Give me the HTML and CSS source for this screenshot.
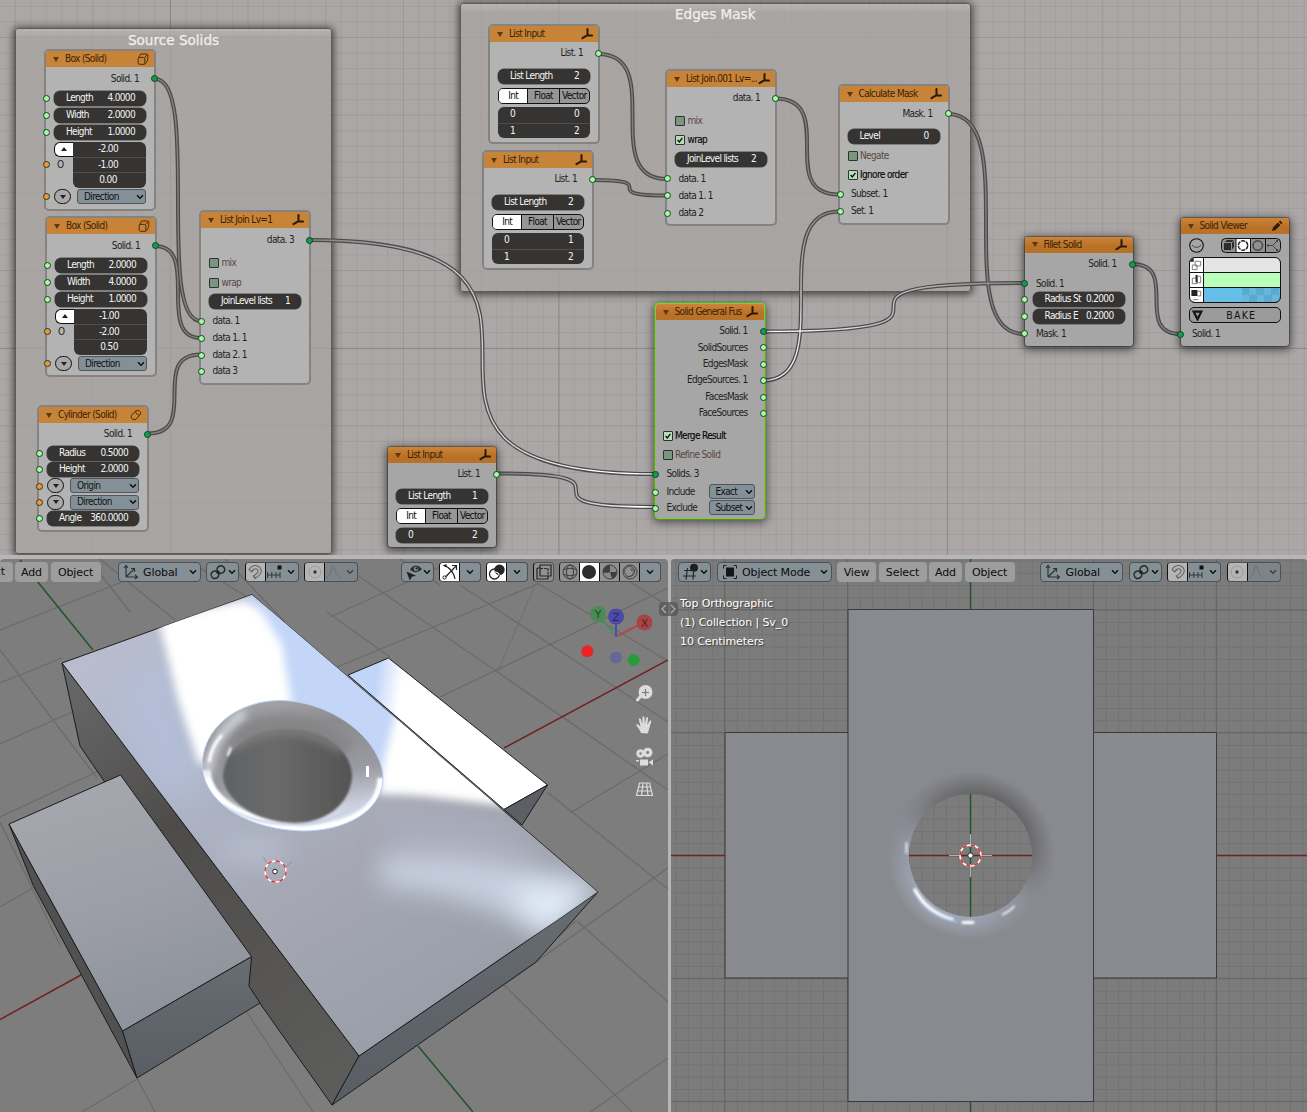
FILE: index.html
```html
<!DOCTYPE html>
<html lang="en">
<head>
<meta charset="utf-8">
<title>Node editor</title>
<link rel="stylesheet" href="styles.css">
</head>
<body>
<svg class="defs" aria-hidden="true">
  <symbol id="i-axes" viewBox="0 0 12 12"><path d="M6.500 1v6.200M6.500 7.200L1.500 10.200M6.500 7.200L11 7.600" fill="none" stroke="#2a1a08" stroke-width="2" stroke-linecap="round"/></symbol>
  <symbol id="i-cube" viewBox="0 0 12 12"><path d="M3.600 1h5.800q1.600 0 1.500 1.400l-.4 5.200-2.200 3.200q-.4.500-1.200.5H2.600q-1.500 0-1.500-1.500l.2-4.600zM1.400 5.200q.4-.8 1.200-.8h3.800q1.400 0 1.400 1.400v4.800M7.600 4.600l2.800-3" fill="none" stroke="#4a2c0c" stroke-width="1"/></symbol>
  <symbol id="i-cyl" viewBox="0 0 12 12"><path d="M1.400 6.200L6 1.800q1.600-1.200 3.500.2 1.900 1.600.8 3.600L6 10.200q-1.800 1.200-3.700-.2Q.6 8.200 1.400 6.200zM5.800 2.200q-.4 3.200 4 4" fill="none" stroke="#4a2c0c" stroke-width="1"/></symbol>
  <symbol id="i-pen" viewBox="0 0 12 12"><path d="M1 11l1-3.400L7 2.600l2.400 2.400-5 5zM7.800 1.800l1.300-1.200 2.400 2.300-1.300 1.300z" fill="#2a1a08"/></symbol>
  <symbol id="i-chev" viewBox="0 0 8 6"><path d="M1 1.200l3 3 3-3" fill="none" stroke="#111" stroke-width="1.500"/></symbol>
  <symbol id="i-tick" viewBox="0 0 10 10"><path d="M2 5l2.200 2.500L8 2.300" fill="none" stroke="#0a0a0a" stroke-width="1.600"/></symbol>
  <symbol id="i-orient" viewBox="0 0 16 16"><path d="M3 13V2M1 4l2-2.500L5 4M3 13h11M12 11l2.500 2-2.500 2M3 13l8-8M8 4.500h3.500V8" fill="none" stroke="#2c3135" stroke-width="1.100"/></symbol>
  <symbol id="i-pivot" viewBox="0 0 16 16"><path d="M6.500 7q-4-.5-5.300 2.500Q.5 13 3.500 14.500q4 .5 5.300-3 .4-2.500-1.300-3.500M9.500 9.500q4 .2 5.200-3Q15 3 12 1.800 8 1.500 7 5q-.2 2 1 3" fill="none" stroke="#26292c" stroke-width="1.400"/><circle cx="8" cy="8.200" r="1.700" fill="#1c1c1c"/></symbol>
  <symbol id="i-magnet" viewBox="0 0 16 16"><path d="M2 5.500Q5 1 9 1.500q5 1 5.300 5.500-.3 4-6.300 7.500L6.300 12q4.500-2.500 4.700-5-.2-2.200-2.500-2.300-2 0-4.300 3zM4.500 8L7 5.500M8.500 14l-2-2.500" fill="none" stroke="#666" stroke-width="1.100"/></symbol>
  <symbol id="i-incr" viewBox="0 0 16 16"><path d="M1.500 8v6M5.800 8v6M10 8v6M14 8v6M1.500 11h12.500" stroke="#33383b" fill="none"/><path d="M11.500 1.500h4v4h-4z" fill="#111"/></symbol>
  <symbol id="i-prop" viewBox="0 0 16 16"><circle cx="8" cy="8" r="6" fill="none" stroke="#9a9a9a"/><circle cx="8" cy="8" r="1.700" fill="#333"/></symbol>
  <symbol id="i-bell" viewBox="0 0 16 16"><path d="M1 13.500Q5 13 6 6.500T8 2q1 .2 2 4.500t5 7" fill="none" stroke="#5d6265"/></symbol>
  <symbol id="i-eye" viewBox="0 0 18 18"><path d="M5 6.500Q10.500-1 17 6 11 12 5 6.500z" fill="#26292b"/><circle cx="11" cy="5.800" r="2.300" fill="#87929a"/><circle cx="11.500" cy="5.300" r="1.100" fill="#111"/><path d="M1.500 8.500l9.500 4.300-4.200 1L4.800 17.500z" fill="#1d1f20"/></symbol>
  <symbol id="i-gizmo" viewBox="0 0 18 18"><path d="M4 2.500Q12.500 7 14 16M4 14.500L15 3M11 2.500h4.500V7" fill="none" stroke="#222" stroke-width="1.200"/><circle cx="3.500" cy="14.500" r="1.600" fill="#fff" stroke="#222"/><path d="M1.500 2.500l4-1.500v3.500z" fill="#222"/></symbol>
  <symbol id="i-over" viewBox="0 0 18 18"><circle cx="6.500" cy="11" r="5" fill="#fff" stroke="#222" stroke-width="1.300"/><circle cx="11.500" cy="6.800" r="5.200" fill="#262626"/><path d="M6.700 9a5 5 0 0 1 4.700 2.800" fill="none" stroke="#eee" stroke-width="1.200"/></symbol>
  <symbol id="i-xray" viewBox="0 0 18 18"><path d="M5 2h11v11H5zM2 5v11h11v-3M2 5h3" fill="none" stroke="#222" stroke-width="1.200"/><path d="M5.500 5.500h7.500V13" fill="none" stroke="#222" stroke-width="1.200" stroke-dasharray="2.500 1.200"/></symbol>
  <symbol id="i-wire" viewBox="0 0 18 18"><circle cx="9" cy="9" r="7" fill="none" stroke="#3d3d3d"/><ellipse cx="9" cy="9" rx="3.500" ry="7" fill="none" stroke="#3d3d3d"/><path d="M2.500 6.500q6.500-2.500 13 0M2.500 11.500q6.500 2.500 13 0" fill="none" stroke="#3d3d3d"/></symbol>
  <symbol id="i-mat" viewBox="0 0 18 18"><circle cx="9" cy="9" r="7" fill="#8a8a8a" stroke="#3d3d3d"/><path d="M9 2a7 7 0 0 0-7 7q3 2 7 0zM9 9h7a7 7 0 0 1-5 6.700z" fill="#3f3f3f"/></symbol>
  <symbol id="i-rend" viewBox="0 0 18 18"><circle cx="9" cy="9" r="7" fill="none" stroke="#3d3d3d"/><circle cx="8.500" cy="8.500" r="5" fill="none" stroke="#4a4a4a"/><path d="M10.500 5.500l2 2-1 1-2-2zM5 14q8 0 9-8" fill="none" stroke="#4a4a4a"/></symbol>
  <symbol id="i-3d" viewBox="0 0 18 18"><path d="M2 7.500h13M1 13h13M5.500 5L4 16.500M11.500 9L11 16.500" fill="none" stroke="#26292b" stroke-width="1.200"/><circle cx="12" cy="4.800" r="4" fill="#1d1f20"/></symbol>
  <symbol id="i-obj" viewBox="0 0 16 16"><path d="M4.500 1.500h-3v3M11.500 1.500h3v3M4.500 14.500h-3v-3M11.500 14.500h3v-3" fill="none" stroke="#222"/><path d="M4 3.500h8v9H4z" fill="#161616"/></symbol>
</svg>

<main class="app">
<section class="canvas">
  <div class="frame frame-src"><h2>Source Solids</h2></div>
  <div class="frame frame-mask"><h2>Edges Mask</h2></div>

  <svg class="links" width="1307" height="555">
    <defs>
      <linearGradient id="toSel" gradientUnits="userSpaceOnUse" x1="310" y1="0" x2="600" y2="0"><stop offset="0" stop-color="#828282"/><stop offset="1" stop-color="#fff"/></linearGradient>
      <linearGradient id="toSel2" gradientUnits="userSpaceOnUse" x1="520" y1="0" x2="640" y2="0"><stop offset="0" stop-color="#828282"/><stop offset="1" stop-color="#fff"/></linearGradient>
      <linearGradient id="fromSel" gradientUnits="userSpaceOnUse" x1="790" y1="360" x2="835" y2="211"><stop offset="0" stop-color="#f2f2f2"/><stop offset="1" stop-color="#828282"/></linearGradient>
      <linearGradient id="fromSel2" gradientUnits="userSpaceOnUse" x1="770" y1="0" x2="1024" y2="0"><stop offset="0" stop-color="#fff"/><stop offset="1" stop-color="#828282"/></linearGradient>
      <path id="w1" d="M155 79C201 79 155 321 201 321"/><path id="w2" d="M155 246C201 246 155 338 201 338"/><path id="w3" d="M148 433.500C201 433.500 148 354.500 201 354.500"/>
      <path id="w4" d="M310 240C655 240 310 474 655 474"/><path id="w5" d="M598 54C667 54 598 179 667 179"/><path id="w6" d="M592 180C667 180 592 195.500 667 195.500"/>
      <path id="w7" d="M775 98.500C839 98.500 775 194.500 839 194.500"/><path id="w8" d="M948 114C1024 114 948 334 1024 334"/><path id="w9" d="M763 380.500C839 380.500 763 211.500 839 211.500"/>
      <path id="w10" d="M763 331.500C1024 331.500 763 283 1024 283"/><path id="w11" d="M497 473.500C655 473.500 497 507 655 507"/><path id="w12" d="M1132 264C1181 264 1132 334 1181 334"/>
    </defs>
    <g class="wire-out">
      <use href="#w1"/><use href="#w2"/><use href="#w3"/><use href="#w4"/><use href="#w5"/><use href="#w6"/><use href="#w7"/><use href="#w8"/><use href="#w9"/><use href="#w10"/><use href="#w11"/><use href="#w12"/>
    </g>
    <g class="wire-in">
      <use href="#w1"/><use href="#w2"/><use href="#w3"/><use href="#w5"/><use href="#w6"/><use href="#w7"/><use href="#w8"/><use href="#w12"/>
      <use href="#w4" stroke="url(#toSel)"/><use href="#w9" stroke="url(#fromSel)"/><use href="#w10" stroke="url(#fromSel2)"/><use href="#w11" stroke="url(#toSel2)"/>
    </g>
  </svg>

  <article class="node framed n-box1">
    <header><b></b><span>Box (Solid)</span><svg><use href="#i-cube"/></svg></header>
    <div class="rows r-box">
      <div class="row out">Solid. 1<i class="s so solid"></i></div>
      <div class="row"><i class="s si"></i><p class="field"><span>Length</span><span>4.0000</span></p></div>
      <div class="row"><i class="s si"></i><p class="field"><span>Width</span><span>2.0000</span></p></div>
      <div class="row"><i class="s si"></i><p class="field"><span>Height</span><span>1.0000</span></p></div>
      <div class="row vec"><i class="s si vecs"></i><div class="side"><em class="up"></em><span>O</span></div><div class="stack"><span>-2.00</span><span>-1.00</span><span>0.00</span></div></div>
      <div class="row"><i class="s si vecs"></i><em class="down"></em><p class="drop">Direction<svg><use href="#i-chev"/></svg></p></div>
    </div>
  </article>

  <article class="node framed n-box2">
    <header><b></b><span>Box (Solid)</span><svg><use href="#i-cube"/></svg></header>
    <div class="rows r-box">
      <div class="row out">Solid. 1<i class="s so solid"></i></div>
      <div class="row"><i class="s si"></i><p class="field"><span>Length</span><span>2.0000</span></p></div>
      <div class="row"><i class="s si"></i><p class="field"><span>Width</span><span>4.0000</span></p></div>
      <div class="row"><i class="s si"></i><p class="field"><span>Height</span><span>1.0000</span></p></div>
      <div class="row vec"><i class="s si vecs"></i><div class="side"><em class="up"></em><span>O</span></div><div class="stack"><span>-1.00</span><span>-2.00</span><span>0.50</span></div></div>
      <div class="row"><i class="s si vecs"></i><em class="down"></em><p class="drop">Direction<svg><use href="#i-chev"/></svg></p></div>
    </div>
  </article>

  <article class="node framed n-cyl">
    <header><b></b><span>Cylinder (Solid)</span><svg><use href="#i-cyl"/></svg></header>
    <div class="rows r-cyl">
      <div class="row out">Solid. 1<i class="s so solid"></i></div>
      <div class="row"><i class="s si"></i><p class="field"><span>Radius</span><span>0.5000</span></p></div>
      <div class="row"><i class="s si"></i><p class="field"><span>Height</span><span>2.0000</span></p></div>
      <div class="row"><i class="s si vecs"></i><em class="down"></em><p class="drop">Origin<svg><use href="#i-chev"/></svg></p></div>
      <div class="row"><i class="s si vecs"></i><em class="down"></em><p class="drop">Direction<svg><use href="#i-chev"/></svg></p></div>
      <div class="row"><i class="s si"></i><p class="field"><span>Angle</span><span>360.0000</span></p></div>
    </div>
  </article>

  <article class="node framed n-join">
    <header><b></b><span>List Join Lv=1</span><svg><use href="#i-axes"/></svg></header>
    <div class="rows r-join">
      <div class="row out">data. 3<i class="s so solid"></i></div>
      <div class="row off"><u></u>mix</div>
      <div class="row off"><u></u>wrap</div>
      <div class="row"><p class="field"><span>JoinLevel lists</span><span>1</span></p></div>
      <div class="row in"><i class="s si"></i>data. 1</div>
      <div class="row in"><i class="s si"></i>data 1. 1</div>
      <div class="row in"><i class="s si"></i>data 2. 1</div>
      <div class="row in"><i class="s si"></i>data 3</div>
    </div>
  </article>

  <article class="node framed n-lista">
    <header><b></b><span>List Input</span><svg><use href="#i-axes"/></svg></header>
    <div class="rows r-list">
      <div class="row out">List. 1<i class="s so"></i></div>
      <div class="row"><p class="field"><span>List Length</span><span>2</span></p></div>
      <div class="row"><div class="tabs"><span>Int</span><span>Float</span><span>Vector</span></div></div>
      <div class="row"><div class="pairs"><p><span>0</span><span>0</span></p><p><span>1</span><span>2</span></p></div></div>
    </div>
  </article>

  <article class="node framed n-listb">
    <header><b></b><span>List Input</span><svg><use href="#i-axes"/></svg></header>
    <div class="rows r-list">
      <div class="row out">List. 1<i class="s so"></i></div>
      <div class="row"><p class="field"><span>List Length</span><span>2</span></p></div>
      <div class="row"><div class="tabs"><span>Int</span><span>Float</span><span>Vector</span></div></div>
      <div class="row"><div class="pairs"><p><span>0</span><span>1</span></p><p><span>1</span><span>2</span></p></div></div>
    </div>
  </article>

  <article class="node framed n-join1">
    <header><b></b><span>List Join.001 Lv=...</span><svg><use href="#i-axes"/></svg></header>
    <div class="rows r-join1">
      <div class="row out">data. 1<i class="s so"></i></div>
      <div class="row off"><u></u>mix</div>
      <div class="row on"><u><svg><use href="#i-tick"/></svg></u>wrap</div>
      <div class="row"><p class="field"><span>JoinLevel lists</span><span>2</span></p></div>
      <div class="row in"><i class="s si"></i>data. 1</div>
      <div class="row in"><i class="s si"></i>data 1. 1</div>
      <div class="row in"><i class="s si"></i>data 2</div>
    </div>
  </article>

  <article class="node framed n-calc">
    <header><b></b><span>Calculate Mask</span><svg><use href="#i-axes"/></svg></header>
    <div class="rows r-calc">
      <div class="row out">Mask. 1<i class="s so"></i></div>
      <div class="row"><p class="field"><span>Level</span><span>0</span></p></div>
      <div class="row off"><u></u>Negate</div>
      <div class="row on"><u><svg><use href="#i-tick"/></svg></u>Ignore order</div>
      <div class="row in"><i class="s si"></i>Subset. 1</div>
      <div class="row in"><i class="s si"></i>Set. 1</div>
    </div>
  </article>

  <article class="node free n-listc">
    <header><b></b><span>List Input</span><svg><use href="#i-axes"/></svg></header>
    <div class="rows r-listc">
      <div class="row out">List. 1<i class="s so"></i></div>
      <div class="row"><p class="field"><span>List Length</span><span>1</span></p></div>
      <div class="row"><div class="tabs"><span>Int</span><span>Float</span><span>Vector</span></div></div>
      <div class="row"><p class="field"><span>0</span><span>2</span></p></div>
    </div>
  </article>

  <article class="node free selected n-fuse">
    <header><b></b><span>Solid General Fus</span><svg><use href="#i-axes"/></svg></header>
    <div class="rows r-fuse">
      <div class="row out">Solid. 1<i class="s so solid"></i></div>
      <div class="row out">SolidSources<i class="s so"></i></div>
      <div class="row out">EdgesMask<i class="s so"></i></div>
      <div class="row out">EdgeSources. 1<i class="s so"></i></div>
      <div class="row out">FacesMask<i class="s so"></i></div>
      <div class="row out">FaceSources<i class="s so"></i></div>
      <div class="row on gap"><u><svg><use href="#i-tick"/></svg></u>Merge Result</div>
      <div class="row off"><u></u>Refine Solid</div>
      <div class="row in"><i class="s si solid"></i>Solids. 3</div>
      <div class="row in"><i class="s si"></i>Include<p class="drop short">Exact<svg><use href="#i-chev"/></svg></p></div>
      <div class="row in"><i class="s si"></i>Exclude<p class="drop short">Subset<svg><use href="#i-chev"/></svg></p></div>
    </div>
  </article>

  <article class="node free n-fillet">
    <header><b></b><span>Fillet Solid</span><svg><use href="#i-axes"/></svg></header>
    <div class="rows r-fillet">
      <div class="row out">Solid. 1<i class="s so solid"></i></div>
      <div class="row in"><i class="s si solid"></i>Solid. 1</div>
      <div class="row"><i class="s si"></i><p class="field"><span>Radius St</span><span>0.2000</span></p></div>
      <div class="row"><i class="s si"></i><p class="field"><span>Radius E</span><span>0.2000</span></p></div>
      <div class="row in"><i class="s si"></i>Mask. 1</div>
    </div>
  </article>

  <article class="node free n-view">
    <header><b></b><span>Solid Viewer</span><svg><use href="#i-pen"/></svg></header>
    <div class="rows r-view">
      <div class="row tools">
        <svg width="15" height="15" viewBox="0 0 15 15"><circle cx="7.500" cy="7.500" r="6.800" fill="none" stroke="#111" stroke-width="1.100"/><path d="M3 7q4.500 5 9 0" fill="none" stroke="#444"/></svg>
        <svg width="60" height="15" viewBox="0 0 60 15"><rect x=".5" y=".5" width="59" height="14" rx="4" fill="#909090" stroke="#111"/><path d="M15 1h14v13H15z" fill="#fff"/><path d="M15 0v15M29.500 0v15M44.500 0v15" stroke="#111"/><path d="M3 5h7v7H3zM4 4l2-2h7l-2 2zM11 5l2-2v6l-2 2.500z" fill="#2c2c2c"/><circle cx="22" cy="7.500" r="4.700" fill="none" stroke="#222" stroke-width="1.500" stroke-dasharray="4.100 .8"/><circle cx="36.800" cy="7.500" r="4.700" fill="none" stroke="#444" stroke-width="1.500"/><path d="M56 3l-4.500 4.500L56 12M51.500 7.500h-4" fill="none" stroke="#444"/><path d="M55 2h2v2h-2zM55 11h2v2h-2zM46 6.500h2v2h-2z" fill="#444"/></svg>
      </div>
      <div class="row"><div class="swatches">
        <div><svg viewBox="0 0 14 15"><path d="M5.500 3.500h6v5h-6zM2.500 7.500h5v5h-5z" fill="none" stroke="#777"/><path d="M0 0h4v4H0z" fill="#222"/></svg><span class="c1"></span></div>
        <div><svg viewBox="0 0 14 15"><path d="M7.500 3.500h4v7h-4zM2.500 5.500h5v6h-5z" fill="none" stroke="#777"/><path d="M6 2h2v8H6z" fill="#222"/></svg><span class="c2"></span></div>
        <div><svg viewBox="0 0 14 15"><path d="M8.500 3.500h3v5h-3M3 12.500h6" fill="none" stroke="#777"/><path d="M1.500 2h6.500v6.500H1.500z" fill="#222"/></svg><span class="c3"></span></div>
      </div></div>
      <div class="row"><div class="bake"><svg viewBox="0 0 10 10"><path d="M1.500 1.500h7L5 8.500z" fill="none" stroke="#151515" stroke-width="2"/></svg><span>BAKE</span></div></div>
      <div class="row in"><i class="s si solid"></i>Solid. 1</div>
    </div>
  </article>
</section>

<div class="views">
<section class="view persp">
  <svg class="scene" width="668" height="553" viewBox="0 559 668 553">
    <defs>
      <filter id="b4" filterUnits="userSpaceOnUse" x="0" y="540" width="668" height="572"><feGaussianBlur stdDeviation="4.500"/></filter>
      <filter id="b12" filterUnits="userSpaceOnUse" x="0" y="540" width="668" height="572"><feGaussianBlur stdDeviation="13"/></filter>
      <filter id="b1" filterUnits="userSpaceOnUse" x="0" y="540" width="668" height="572"><feGaussianBlur stdDeviation="1"/></filter>
      <linearGradient id="top" gradientUnits="userSpaceOnUse" x1="150" y1="620" x2="400" y2="1050"><stop offset="0" stop-color="#b9bccd"/><stop offset=".3" stop-color="#b0b8ca"/><stop offset=".6" stop-color="#a6a8b4"/><stop offset="1" stop-color="#989ea7"/></linearGradient>
      <linearGradient id="lbox" gradientUnits="userSpaceOnUse" x1="90" y1="780" x2="160" y2="1010"><stop offset="0" stop-color="#a5a7ae"/><stop offset=".5" stop-color="#9c9fa7"/><stop offset="1" stop-color="#8f939c"/></linearGradient>
      <linearGradient id="side" gradientUnits="userSpaceOnUse" x1="70" y1="700" x2="330" y2="1080"><stop offset="0" stop-color="#656565"/><stop offset=".35" stop-color="#4e4c4b"/><stop offset="1" stop-color="#5c5c5b"/></linearGradient>
      <linearGradient id="front" x1="0" y1="0" x2="0" y2="1"><stop offset="0" stop-color="#686d72"/><stop offset="1" stop-color="#595d64"/></linearGradient>
      <linearGradient id="bbox" gradientUnits="userSpaceOnUse" x1="374" y1="690" x2="400" y2="694"><stop offset="0" stop-color="#c1d5f8"/><stop offset="1" stop-color="#fff"/></linearGradient>
      <linearGradient id="wall" x1="0" y1="0" x2="1" y2="0"><stop offset="0" stop-color="#5f6365"/><stop offset=".4" stop-color="#6b6a69"/><stop offset="1" stop-color="#545454"/></linearGradient>
      <linearGradient id="rim" gradientUnits="userSpaceOnUse" x1="280" y1="700" x2="300" y2="830"><stop offset="0" stop-color="#a2a3a8"/><stop offset=".22" stop-color="#8c8b8d"/><stop offset=".6" stop-color="#9a9ba3"/><stop offset="1" stop-color="#e2e8f4"/></linearGradient>
      <clipPath id="topClip"><path d="M62 663L252 594.500 598 892 359 1056z"/></clipPath>
      <path id="rimP" d="M202.500 769C200 730 236 700 282 700.500C335 702 384 742 383 780C381 811 346 831 303 831C251 830 206 805 202.500 769z"/>
      <clipPath id="rimClip"><use href="#rimP"/></clipPath>
    </defs>
    <g class="floor">
      <path d="M0 630L160 567M0 683L62 658M0 744L72 712M0 817L105 768M0 907L33 888M82 1112L137 1079M330 617L440 567M320 674L540 583M440 697L668 588M570 813L668 754M576 921L505 984M505 984L668 868M590 1112L668 1058"/>
      <path d="M101 575L130 612M100 559L175 620M0 650L97 778M0 822L60 945M137 1078L155 1112M246 1011L313 1112M195 565L252 600M347 568L668 790M460 585L668 722M537 583L668 661M327 612L390 657M547 792L668 889M577 921L668 1002M500 981L632 1112M225 559L285 622M400 559L440 585M600 563L668 606"/>
      <path class="thin" d="M536 583L498 671"/>
    </g>
    <path d="M20 560L93 650M418 1046L473 1112" stroke="#235428" stroke-width="1.500"/>
    <path d="M668 660L504 748M81 975L0 1019.500" stroke="#732022" stroke-width="1.500"/>
    <g stroke="#1c1c1e" stroke-width="1" stroke-linejoin="round">
      <path d="M348 675L388.500 658 547.500 785 504 809.500z" fill="url(#bbox)"/>
      <path d="M547.500 785L504 809.500 522 825z" fill="#5c6064"/>
      <path d="M62 663L359 1056 332 1105 249 988 104 781 80 746z" fill="url(#side)"/>
      <path d="M359 1056L598 892 536 962 332 1105z" fill="url(#front)"/>
      <path d="M62 663L252 594.500 598 892 359 1056z" fill="url(#top)"/>
    </g>
    <g clip-path="url(#topClip)">
      <path d="M245 590L360 660 420 735 385 790 285 720z" fill="#c3d6f8" filter="url(#b4)"/>
      <path d="M110 700L165 640 195 730 200 800 150 780z" fill="#b3bfdc" filter="url(#b12)" opacity=".6"/>
      <path d="M158 618L245 600 262 612 282 645 292 705 240 745 199 765 178 700z" fill="#fff" filter="url(#b4)"/>
      <path d="M398 705L520 808 505 806 420 796 378 794 384 760z" fill="#fff" filter="url(#b4)"/>
      <path d="M385 812L505 826 550 862 470 870 390 850z" fill="#aaadbd" filter="url(#b12)"/>
      <path d="M380 856Q480 850 600 885L548 940Q480 895 380 886z" fill="#cdd6e6" filter="url(#b12)" opacity=".85"/>
      <path d="M505 888L592 888 545 930z" fill="#e4eefb" filter="url(#b12)"/>
      <ellipse cx="255" cy="850" rx="36" ry="12" fill="#bcc4d6" filter="url(#b12)" opacity=".8"/>
    </g>
    <use href="#rimP" fill="url(#rim)"/>
    <g clip-path="url(#rimClip)">
      <path d="M235 735Q290 705 350 748" fill="none" stroke="#848385" stroke-width="14" filter="url(#b4)" opacity=".8"/>
      <path d="M206 770Q208 815 300 831Q380 826 382 778" fill="none" stroke="#fff" stroke-width="9" filter="url(#b1)"/>
      <path d="M222 805Q255 826 300 824Q340 822 368 797" fill="none" stroke="#c3cfe6" stroke-width="2" filter="url(#b1)"/>
      <path d="M207 775Q210 738 245 712" fill="none" stroke="#d6d9e2" stroke-width="9" filter="url(#b4)"/>
      <path d="M209 762Q212 745 222 735" fill="none" stroke="#fff" stroke-width="3" filter="url(#b1)"/>
      <path d="M228 756l3-9" stroke="#fff" stroke-width="2.500" filter="url(#b1)"/>
    </g>
    <path d="M223 778C223 748 252 729 287 729C324 729 352 750 352 777C350 805 325 823 294 823C257 822 227 803 223 778z" fill="url(#wall)" filter="url(#b1)"/>
    <path d="M232 748Q285 712 342 750" fill="none" stroke="#838284" stroke-width="7" filter="url(#b4)"/>
    <path d="M366 766h3v11h-3z" fill="#fff"/>
    <use href="#rimP" fill="none" stroke="#bccfef" stroke-width="1"/>
    <g stroke="#1c1c1e" stroke-width="1" stroke-linejoin="round">
      <path d="M9 824L122.500 1031 137 1078 33 885z" fill="#515151"/>
      <path d="M122.500 1031L251.500 956.500 249 986 260 1003 137 1078z" fill="url(#front)"/>
      <path d="M9 824L120.500 775 251.500 956.500 122.500 1031z" fill="url(#lbox)"/>
    </g>
    <path d="M263 857l6 9M292 862l-8 6M276 859v5" stroke="#918d8d" stroke-width=".8"/>
    <circle cx="275.500" cy="871.500" r="10.500" fill="none" stroke="#fff" stroke-width="1.400"/>
    <circle cx="275.500" cy="871.500" r="10.500" fill="none" stroke="#e22" stroke-width="1.400" stroke-dasharray="4.120 4.120"/>
    <circle cx="275" cy="871.500" r="2.300" fill="#fff" stroke="#222"/>
    <g stroke-width="2"><path d="M616 636.500L598 614" stroke="#4a8f55"/><path d="M616 636.500L644 622.500" stroke="#b44848"/><path d="M616 636.500V616" stroke="#4b4bb5"/></g>
    <circle cx="598" cy="614" r="8" fill="#4a8b55"/><circle cx="616" cy="616.500" r="8" fill="#4a4aab"/><circle cx="644.500" cy="622.500" r="8" fill="#a94345"/>
    <circle cx="587.300" cy="651.300" r="6" fill="#ee2222"/><circle cx="616" cy="657.500" r="6" fill="#666799"/><circle cx="633.700" cy="660" r="6" fill="#289c3b"/>
    <g class="axis"><text x="598" y="618">Y</text><text x="616" y="620.500">Z</text><text x="644.500" y="626.500">X</text></g>
    <g fill="#dcdcdc">
      <circle cx="645.500" cy="692" r="7"/><path d="M641 696l-4.500 5" stroke="#dcdcdc" stroke-width="3"/><path d="M642 692.500h7M645.500 689v7" stroke="#777" stroke-width="1.200"/>
      <path d="M641 733q-1-3-5-8 1-1.500 3 .3l1.500 1.500L638.800 719q1.200-1.500 2 0l1.500 5 .2-7q1.200-1.300 2 0l.3 7 1.500-6.500q1.300-1 1.800.3L647.300 725l2.500-4.500q1.600-.5 1.500 1L649 729q-.5 3-1.500 4.500z"/>
      <circle cx="640.500" cy="753.500" r="4.200"/><circle cx="647.700" cy="752.500" r="4.800"/><circle cx="640.500" cy="753.500" r="1.200" fill="#7a7a7a"/><circle cx="647.700" cy="752.500" r="1.400" fill="#7a7a7a"/><path d="M640 759.500h8v6h-8zM648.500 762.500l4.500-3v6zM636 760h3v1.500h-3z"/>
    </g>
    <path d="M639.500 783h10l3 12.500h-16zM638.500 787h12M637.500 791h14M643 783l-1.500 12.500M646.500 783l1.500 12.500" fill="none" stroke="#dcdcdc" stroke-width="1.200"/>
  </svg>
  <div class="bar bar-left">
    <button class="menu w13 cut">ct</button><button class="menu w33">Add</button><button class="menu w50">Object</button>
    <div class="dd w83 push17"><svg class="ic"><use href="#i-orient"/></svg><span>Global</span><svg class="cv"><use href="#i-chev"/></svg></div>
    <div class="dd w33 tight"><svg class="ic"><use href="#i-pivot"/></svg><svg class="cv"><use href="#i-chev"/></svg></div>
    <div class="dd w54 split"><div class="cell lit"><svg class="ic"><use href="#i-magnet"/></svg></div><svg class="ic"><use href="#i-incr"/></svg><svg class="cv"><use href="#i-chev"/></svg></div>
    <div class="dd w54 split dim"><div class="cell lit"><svg class="ic"><use href="#i-prop"/></svg></div><svg class="ic"><use href="#i-bell"/></svg><svg class="cv"><use href="#i-chev"/></svg></div>
    <div class="dd w33 tight push43"><svg class="ic big"><use href="#i-eye"/></svg><svg class="cv"><use href="#i-chev"/></svg></div>
    <div class="dd w42 split"><div class="cell white"><svg class="ic big"><use href="#i-gizmo"/></svg></div><svg class="cv mid"><use href="#i-chev"/></svg></div>
    <div class="dd w42 split"><div class="cell white"><svg class="ic big"><use href="#i-over"/></svg></div><svg class="cv mid"><use href="#i-chev"/></svg></div>
    <div class="dd w21 gray"><svg class="ic big"><use href="#i-xray"/></svg></div>
    <div class="dd w102 split"><div class="cell gray"><svg class="ic big"><use href="#i-wire"/></svg></div><div class="cell white"><svg class="ic"><circle cx="8" cy="8" r="7" fill="#2d2d2d"/></svg></div><div class="cell gray"><svg class="ic big"><use href="#i-mat"/></svg></div><div class="cell gray"><svg class="ic big"><use href="#i-rend"/></svg></div><svg class="cv mid"><use href="#i-chev"/></svg></div>
  </div>
</section>

<section class="view ortho">
  <svg class="scene" width="636" height="553" viewBox="671 559 636 553">
    <defs>
      <pattern id="minor" patternUnits="userSpaceOnUse" x="970.500" y="855.500" width="12.290" height="12.290"><path d="M0 0H12.290M0 0V12.290" stroke="#717171" stroke-width="1.800" fill="none"/></pattern>
      <pattern id="major" patternUnits="userSpaceOnUse" x="970" y="855" width="122.900" height="122.900"><path d="M0 .5H122.900M.5 0V122.900" stroke="#646464" stroke-width="1" fill="none"/></pattern>
      <radialGradient id="halo" gradientUnits="userSpaceOnUse" cx="970.500" cy="855.500" r="84"><stop offset=".73" stop-color="#fff" stop-opacity="1"/><stop offset=".85" stop-color="#fff" stop-opacity=".5"/><stop offset="1" stop-color="#fff" stop-opacity="0"/></radialGradient>
      <linearGradient id="tone" gradientUnits="userSpaceOnUse" x1="1005" y1="790" x2="930" y2="918"><stop offset="0" stop-color="#5f5f5f"/><stop offset=".3" stop-color="#6f6f72"/><stop offset=".6" stop-color="#8f949f"/><stop offset="1" stop-color="#a4aebf"/></linearGradient>
      <mask id="haloMask"><circle cx="970.500" cy="855.500" r="84" fill="url(#halo)"/></mask>
      <filter id="bb" filterUnits="userSpaceOnUse" x="880" y="765" width="181" height="181"><feGaussianBlur stdDeviation=".8"/></filter>
      <clipPath id="hole"><circle cx="970.500" cy="855.300" r="61.500"/></clipPath>
    </defs>
    <rect x="671" y="559" width="636" height="553" fill="#7c7c7c"/>
    <rect x="671" y="559" width="636" height="553" fill="url(#minor)"/>
    <rect x="671" y="559" width="636" height="553" fill="url(#major)"/>
    <path d="M970.500 559V1112" stroke="#23532a" stroke-width="1.400"/><path d="M671 855.500H1307" stroke="#732224" stroke-width="1.400"/>
    <path d="M725 732.500H1216.500V978H725z" fill="#898a90" stroke="#3a3a3c"/>
    <path d="M848 609.500H1093.500V1101.500H848z" fill="#898a90" stroke="#3a3a3c"/>
    <rect x="880" y="765" width="181" height="181" fill="url(#tone)" mask="url(#haloMask)"/>
    <g fill="none" stroke-linecap="round" filter="url(#bb)"><path d="M915 890Q927 912 952 919.500" stroke="#fff" stroke-width="3.600"/><path d="M919 900Q932 917 957 922" stroke="#a9c0ea" stroke-width="1.500"/><path d="M963 922.500h10" stroke="#fff" stroke-width="3"/><path d="M1003 914.500q7-3.500 11-8" stroke="#fff" stroke-width="1.800"/><path d="M906.500 843v10" stroke="#dfe3ec" stroke-width="2.200"/></g>
    <g clip-path="url(#hole)"><circle cx="970.500" cy="855.300" r="62" fill="#7c7c7c"/><rect x="900" y="785" width="140" height="140" fill="url(#minor)"/>
      <path d="M970.500 790V920" stroke="#1d5424" stroke-width="1.400"/><path d="M900 855.500H1040" stroke="#732224" stroke-width="1.400"/></g>
    <path d="M970.500 834v13M970.500 864v13M949 855.500h12M980 855.500h12" stroke="#b5b0b0" stroke-width="1.200"/>
    <circle cx="970.500" cy="855.500" r="10.500" fill="none" stroke="#fff" stroke-width="1.500"/>
    <circle cx="970.500" cy="855.500" r="10.500" fill="none" stroke="#f02020" stroke-width="1.500" stroke-dasharray="4.120 4.120"/>
    <circle cx="970.500" cy="855.500" r="2.600" fill="#fff" stroke="#333"/>
  </svg>
  <div class="bar bar-right">
    <div class="dd w33 tight"><svg class="ic big"><use href="#i-3d"/></svg><svg class="cv"><use href="#i-chev"/></svg></div>
    <div class="dd w115"><svg class="ic"><use href="#i-obj"/></svg><span>Object Mode</span><svg class="cv"><use href="#i-chev"/></svg></div>
    <button class="menu w39">View</button><button class="menu w48">Select</button><button class="menu w33">Add</button><button class="menu w50">Object</button>
    <div class="dd w83 push26"><svg class="ic"><use href="#i-orient"/></svg><span>Global</span><svg class="cv"><use href="#i-chev"/></svg></div>
    <div class="dd w33 tight"><svg class="ic"><use href="#i-pivot"/></svg><svg class="cv"><use href="#i-chev"/></svg></div>
    <div class="dd w54 split"><div class="cell lit"><svg class="ic"><use href="#i-magnet"/></svg></div><svg class="ic"><use href="#i-incr"/></svg><svg class="cv"><use href="#i-chev"/></svg></div>
    <div class="dd w54 split dim"><div class="cell lit"><svg class="ic"><use href="#i-prop"/></svg></div><svg class="ic"><use href="#i-bell"/></svg><svg class="cv"><use href="#i-chev"/></svg></div>
  </div>
  <div class="info"><p>Top Orthographic</p><p>(1) Collection | Sv_0</p><p>10 Centimeters</p></div>
</section>
<svg class="tab" width="19" height="16" viewBox="0 0 19 16"><rect x="0" y="1" width="19" height="14" rx="4" fill="#555" opacity=".75"/><path d="M7 4L3 8l4 4M12 4l4 4-4 4" fill="none" stroke="#aaa" stroke-width="1.300"/></svg>
</div>
</main>
</body>
</html>
```

FILE: styles.css
```css
* { box-sizing: border-box; }
body { margin: 0; background: #b6b6b6; font-family: "DejaVu Sans", sans-serif; }
p, h2 { margin: 0; font-weight: normal; }
.defs { position: absolute; width: 0; height: 0; }
.app { width: 1307px; height: 1112px; display: flex; flex-direction: column; gap: 4px; overflow: hidden; }

/* node canvas */
.canvas {
  position: relative; flex: none; height: 555px; overflow: hidden; background-color: #aba7a6;
  background-image:
    linear-gradient(90deg, rgba(0,0,0,.11) 1px, transparent 1px), linear-gradient(rgba(0,0,0,.11) 1px, transparent 1px),
    linear-gradient(90deg, rgba(0,0,0,.04) 1px, transparent 1px), linear-gradient(rgba(0,0,0,.04) 1px, transparent 1px),
    linear-gradient(90deg, rgba(0,0,0,.055) 1px, transparent 1px), linear-gradient(rgba(0,0,0,.055) 1px, transparent 1px);
  background-size: 388.5px 388.5px, 388.5px 388.5px, 77.7px 77.7px, 77.7px 77.7px, 15.54px 15.54px, 15.54px 15.54px;
  background-position: 170px 0, 0 348px, 14.6px 0, 0 37px, 14.6px 0, 0 6px;
}
.frame {
  position: absolute; border: 1px solid #5c5b5a; border-radius: 3px;
  background: linear-gradient(rgba(190,187,186,.7), rgba(168,164,162,.72) 9px);
  box-shadow: 0 1px 7px 2px rgba(0,0,0,.55);
}
.frame h2 { text-align: center; font-size: 13.6px; line-height: 16px; color: #f0f0f0; -webkit-text-stroke: .25px #f0f0f0; }
.frame-src { left: 15px; top: 28px; width: 317px; height: 525.5px; padding-top: 3px; }
.frame-mask { left: 460px; top: 3px; width: 510.5px; height: 288.5px; padding-top: 2px; }
.links { position: absolute; left: 0; top: 0; }
.wire-out { fill: none; stroke: #4b4b4b; stroke-width: 4; }
.wire-in { fill: none; stroke: #828282; stroke-width: 1.4; }

.node {
  position: absolute; width: 108px; border-radius: 3px; background: #b3b3b3;
  font: 10px/14px "DejaVu Sans Condensed", "DejaVu Sans", sans-serif; font-stretch: condensed;
  letter-spacing: -.65px; color: #222; white-space: nowrap;
}
.framed { box-shadow: 0 0 0 2px #858282; }
.free { background: #a6a6a6; box-shadow: 0 2px 8px 2px rgba(0,0,0,.55), 0 0 1px 1px rgba(60,60,60,.5); }
.selected { box-shadow: 0 0 0 1.3px #74d81c, 0 2px 9px 3px rgba(0,0,0,.5); }
.node header { display: flex; align-items: center; height: 16px; padding: 0 5.5px 0 7px; border-radius: 3px 3px 0 0; background: #c78337; color: #3a2206; }
.free header { background: linear-gradient(#cc8439, #b97127 60%); }
.node header b { width: 0; border: 3px solid transparent; border-top: 5px solid #5a3810; border-bottom: 0; margin-right: 6px; }
.node header span { flex: 1; width: 0; }
.node header svg { width: 12px; height: 12px; flex: none; }
.rows { display: grid; padding: 0 8px; }
.row { position: relative; display: flex; align-items: center; min-width: 0; }
.r-box { grid-template-rows: 23px 17px 17px 17px 47px 17px; }
.r-cyl { grid-template-rows: 22px repeat(5, 16.3px); }
.r-join { grid-template-rows: 24px 22px 17px 21px 17.5px 17px 16.5px 16px; }
.r-list { grid-template-rows: 22px 24px 16px 37px; }
.r-join1 { grid-template-rows: 22px 24px 14px 25px 13px 21px 14px; }
.r-calc { grid-template-rows: 23px 23px 16px 22px 16px 18px; }
.r-listc { grid-template-rows: 22px 23px 16px 23px; }
.r-fuse { grid-template-rows: repeat(6, 16.4px) 24.5px 19px 19px 16px 16px; padding: 3px 9px 0 7px; }
.r-fillet { grid-template-rows: 23.5px 15px 17px 17px 17px; }
.r-view { grid-template-rows: 23px 46.5px 23px 15px; }
.out { justify-content: flex-end; padding-right: 7px; }
.in { padding-left: 3.5px; }
.free .out { padding-right: 8px; }
.r-fuse .out { padding-right: 7px; }
.r-fuse .in { padding-left: 4px; }
.n-box1 { left: 46px; top: 51px; height: 158px; }
.n-box2 { left: 47px; top: 218px; height: 157px; }
.n-cyl { left: 39px; top: 407px; height: 123px; }
.n-join { left: 201px; top: 212px; height: 170.5px; }
.n-lista { left: 490px; top: 26px; height: 116px; }
.n-listb { left: 484px; top: 152px; height: 116px; }
.n-join1 { left: 667px; top: 71px; height: 153px; }
.n-calc { left: 839.5px; top: 86px; height: 136.5px; }
.n-listc { left: 388px; top: 447px; height: 99.5px; }
.n-fuse { left: 655.5px; top: 304px; height: 214px; }
.n-fillet { left: 1024.5px; top: 236.5px; height: 109px; }
.n-view { left: 1180.5px; top: 218px; height: 128px; }

.s { position: absolute; top: calc(50% - 3.2px); width: 7px; height: 7px; border-radius: 50%; border: 1px solid #26352a; background: #9cff9c; }
.si { left: -11px; }
.so { right: -12px; }
.free .so { right: -11.5px; }
.free .si { left: -11.5px; }
.r-fuse .s.so { right: -12px; }
.r-fuse .s.si { left: -11px; }
.s.solid { background: #07a24c; }
.s.vecs { background: #e99b33; }
.field { flex: 1; display: flex; justify-content: space-between; height: 15px; padding: 0 11px 0 12px; border-radius: 6px; background: #353432; box-shadow: 0 0 0 .5px #4c4b49; color: #f4f4f4; }
.side { width: 19px; align-self: stretch; display: flex; flex-direction: column; padding-top: .5px; gap: 1px; }
.side span { padding-left: 3px; }
.up { display: grid; place-items: center; width: 19px; height: 15px; background: #fff; border: 1px solid #111; border-right: 0; border-radius: 6px 0 0 6px; }
.up::after { content: ""; border: 3px solid transparent; border-bottom: 4.5px solid #222; border-top: 0; }
.down { display: grid; place-items: center; flex: none; width: 17px; height: 15px; border: 1px solid #111; border-radius: 8px; background: #a9a9a9; }
.down::after { content: ""; border: 3px solid transparent; border-top: 4.5px solid #222; border-bottom: 0; }
.stack { flex: 1; height: 46px; border-radius: 0 6px 6px 6px; background: #353432; color: #f4f4f4; text-align: center; }
.stack span { display: block; height: 15.3px; line-height: 14px; padding-right: 3px; }
.stack span + span, .pairs p + p { border-top: 1px solid #504f4d; }
.drop { flex: 1; display: flex; justify-content: space-between; align-items: center; height: 15px; margin-left: 6px; padding: 0 1px 0 6px; border: 1px solid #50565a; border-radius: 3px; background: #849097; color: #111; }
.drop svg { width: 8px; height: 6px; }
.short { flex: none; width: 46px; margin-left: auto; }
.row u { width: 10px; height: 10px; flex: none; margin-right: 2.5px; border: 1px solid #2b332c; border-radius: 1px; background: #7b967e; }
.row u svg { display: block; width: 8px; height: 8px; }
.on, .off { padding-left: 0; }
.off { color: #574845; }
.on { color: #050505; -webkit-text-stroke: .1px #050505; }
.on u { background: #b5dfb8; }
.gap { padding-top: 5px; }
.tabs { flex: 1; display: grid; grid-template-columns: 29fr 32fr 31fr; height: 15.5px; line-height: 13px; border: 1px solid #111; border-radius: 5px; background: #969696; overflow: hidden; text-align: center; color: #0d0d0d; }
.tabs span + span { border-left: 1px solid #111; }
.tabs span:first-child { background: #fff; }
.pairs { flex: 1; height: 31px; border-radius: 6px; background: #353432; color: #f4f4f4; }
.pairs p { display: flex; justify-content: space-between; height: 15.5px; padding: 0 11px 0 12px; }
.pairs p + p { line-height: 13px; }
.tools { justify-content: space-between; }
.swatches { width: 92px; height: 46px; border: 1px solid #111; border-radius: 6px; overflow: hidden; display: grid; grid-template-rows: 1fr 1fr 1fr; gap: 1px; background: #111; }
.swatches div { display: flex; gap: 1px; min-height: 0; }
.swatches svg { width: 13px; height: 100%; background: #fff; }
.swatches span { flex: 1; }
.c1 { background: #e4e4e4; }
.c2 { background: #b9ffb9; }
.c3 { background: linear-gradient(90deg, #65bfe8 50%, transparent 50%), repeating-conic-gradient(#5aaad0 0 25%, #68b6dc 0 50%) 0 0 / 15px 14px; }
.bake { width: 92px; height: 15.5px; display: flex; align-items: center; border: 1px solid #111; border-radius: 5px; background: #9b9b9b; letter-spacing: 1.2px; font-size: 10.5px; color: #111; }
.bake svg { width: 11px; height: 11px; margin-left: 2.5px; }
.bake span { flex: 1; text-align: center; }

/* 3D views */
.views { position: relative; flex: none; display: flex; gap: 3px; height: 553px; }
.view { position: relative; flex: none; height: 553px; overflow: hidden; border-radius: 4px 4px 0 0; background: #7d7d7d; }
.persp { width: 668px; }
.ortho { width: 636px; }
.scene { position: absolute; inset: 0; }
.floor { fill: none; stroke: #6b6b6b; stroke-width: 1.3; }
.thin { stroke-width: .8; }
.axis { font: 11px "DejaVu Sans", sans-serif; text-anchor: middle; fill: #222; fill-opacity: .75; }
.bar { position: relative; display: flex; gap: 5.5px; padding-top: 3px; height: 24px; font-size: 11px; line-height: 19px; letter-spacing: -.1px; color: #0c0c0c; white-space: nowrap; }
.bar-left { margin-left: -.5px; }
.bar-right { padding-left: 7px; }
.menu { flex: none; font: inherit; letter-spacing: inherit; color: inherit; padding: 0; border: 0; height: 20px; border-radius: 4px; background: #9e9e9e; text-align: center; }
.menu + .menu { margin-left: -3px; }
.cut { display: flex; justify-content: flex-end; padding-right: 7.5px; border-radius: 0 4px 4px 0; }
.dd { flex: none; display: flex; align-items: center; height: 20px; padding: 0 3px 0 4px; border: 1px solid #4b5156; border-radius: 4px; background: #848f96; overflow: hidden; }
.dd span { flex: 1; padding-left: 4.5px; }
.ic { width: 16px; height: 16px; flex: none; }
.ic.big { width: 18px; height: 18px; }
.cv { width: 8px; height: 6px; flex: none; margin-left: auto; }
.cv.mid { margin-right: 3px; }
.tight { padding: 0 2px 0 3px; }
.split { padding-left: 0; gap: 0; }
.cell { width: 20px; height: 18px; flex: none; display: grid; place-items: center; border-right: 1px solid #111; }
.lit { background: #b5b5b5; }
.white { background: #fff; }
.gray { background: #919191; padding: 0 1px; }
.split:has(.white), .split:has(.lit), .dd.gray { border-left-color: #111; }
.dim > .ic, .dim > .cv { opacity: .6; }
.dim { background: #7e8588; }
.w13 { width: 13px; } .w21 { width: 21px; } .w33 { width: 33px; } .w39 { width: 39px; } .w42 { width: 41.5px; }
.w48 { width: 48px; } .w50 { width: 50px; } .w54 { width: 54px; } .w83 { width: 83px; } .w102 { width: 102px; } .w115 { width: 115px; }
.push17 { margin-left: 11.5px; }
.push26 { margin-left: 20px; }
.push43 { margin-left: 37px; }
.bar-left .w102 { margin-left: -1px; }
.info { position: relative; padding: 11px 0 0 9px; font-size: 11px; line-height: 19px; letter-spacing: -.1px; color: #fff; text-shadow: 1px 1px 1px rgba(0,0,0,.5); }
.tab { position: absolute; left: 659px; top: 42px; }
```
